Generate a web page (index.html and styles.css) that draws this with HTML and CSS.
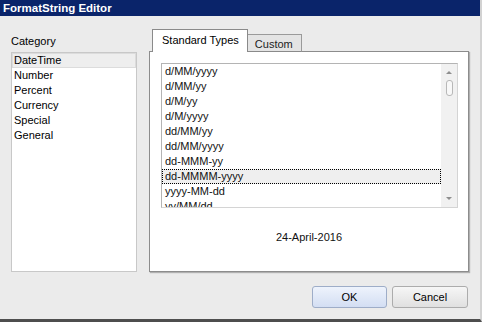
FILE: index.html
```html
<!DOCTYPE html>
<html lang="en">
<head>
  <meta charset="UTF-8">
  <title>FormatString Editor</title>
  <link rel="stylesheet" href="styles.css">
</head>
<body>
  <div class="window">
    <div class="titlebar">FormatString Editor</div>
    <div class="content">
      <div class="main">
        <div class="category">
          <div class="label">Category</div>
          <ul class="cat-list">
            <li class="sel">DateTime</li>
            <li>Number</li>
            <li>Percent</li>
            <li>Currency</li>
            <li>Special</li>
            <li>General</li>
          </ul>
        </div>
        <div class="tabs-area">
          <div class="tabs">
            <div class="tab active">Standard Types</div>
            <div class="tab">Custom</div>
          </div>
          <div class="panel">
            <div class="listbox">
              <ul class="types">
                <li>d/MM/yyyy</li>
                <li>d/MM/yy</li>
                <li>d/M/yy</li>
                <li>d/M/yyyy</li>
                <li>dd/MM/yy</li>
                <li>dd/MM/yyyy</li>
                <li>dd-MMM-yy</li>
                <li class="sel">dd-MMMM-yyyy</li>
                <li>yyyy-MM-dd</li>
                <li>yy/MM/dd</li>
              </ul>
              <div class="scrollbar">
                <span class="arrow up"></span>
                <span class="thumb"></span>
                <span class="spacer"></span>
                <span class="arrow down"></span>
              </div>
            </div>
            <div class="preview">24-April-2016</div>
          </div>
        </div>
      </div>
      <div class="buttons">
        <button class="btn ok">OK</button>
        <button class="btn cancel">Cancel</button>
      </div>
    </div>
  </div>
</body>
</html>
```

FILE: styles.css
```css
html, body {
  margin: 0;
  padding: 0;
}
body {
  width: 482px;
  height: 322px;
  overflow: hidden;
  font-family: "Liberation Sans", Arial, sans-serif;
  font-size: 11px;
  color: #000;
  background: #ebebeb;
}
.window {
  width: 482px;
  height: 322px;
  box-sizing: border-box;
  border-right: 2px solid #d2d2d2;
  border-bottom: 3px solid #4e4e4e;
  display: flex;
  flex-direction: column;
}
.titlebar {
  height: 16px;
  line-height: 16px;
  background: #0a246a;
  color: #fff;
  font-weight: bold;
  font-size: 11.5px;
  padding-left: 3px;
}
.content {
  flex: 1;
  padding: 13px 0 0 11px;
}
.main {
  display: flex;
  gap: 12px;
}
.category {
  width: 126px;
}
.label {
  margin-top: 5px;
  line-height: 14px;
  height: 14px;
  margin-bottom: 4px;
}
ul {
  list-style: none;
  margin: 0;
  padding: 0;
}
.cat-list {
  height: 220px;
  box-sizing: border-box;
  background: #fff;
  border: 1px solid #c8c8c8;
}
.cat-list li {
  height: 15px;
  line-height: 15px;
  padding-left: 2px;
}
.cat-list li.sel {
  background: #eeeeee;
  border: 1px solid #dcdcdc;
  height: 13px;
  line-height: 13px;
  padding-left: 1px;
}
.tabs-area {
  width: 320px;
}
.tabs {
  display: flex;
  align-items: flex-end;
  height: 23px;
  margin-left: 3px;
  margin-bottom: -1px;
  position: relative;
  z-index: 1;
}
.tab {
  box-sizing: border-box;
  border: 1px solid #9a9a9a;
  border-bottom: none;
  padding: 0 7px 0 9px;
}
.tab.active {
  height: 23px;
  line-height: 21px;
  background: #fff;
  border-color: #8a8a8a;
  padding: 0 8px 0 9px;
}
.tab + .tab {
  height: 18px;
  line-height: 19px;
  background: #e4e4e4;
  border-left: none;
  border-bottom: 1px solid #8a8a8a;
  padding: 0 8px 0 7px;
  color: #222;
}
.panel {
  height: 221px;
  box-sizing: border-box;
  background: #fff;
  border: 1px solid #8c8c8c;
  box-shadow: 1px 1px 1px rgba(0, 0, 0, 0.25);
  padding: 11px 0 0 11px;
}
.listbox {
  width: 297px;
  height: 145px;
  box-sizing: border-box;
  border: 1px solid #b4b4b4;
  border-bottom-color: #d4d4d4;
  border-right-color: #d4d4d4;
  display: flex;
  overflow: hidden;
}
.types {
  flex: 1;
  overflow: hidden;
}
.types li {
  height: 15px;
  line-height: 15px;
  padding-left: 3px;
  color: #111;
  white-space: nowrap;
}
.types li.sel {
  background: #efefef;
  outline: 1px dotted #000;
  outline-offset: -1px;
}
.scrollbar {
  width: 16px;
  background: #f1f1f1;
  display: flex;
  flex-direction: column;
  align-items: center;
}
.arrow {
  width: 0;
  height: 0;
  border-left: 3px solid transparent;
  border-right: 3px solid transparent;
}
.arrow.up {
  margin-top: 7px;
  border-bottom: 3px solid #8e8e8e;
}
.arrow.down {
  margin-bottom: 7px;
  border-top: 3px solid #8e8e8e;
}
.thumb {
  margin-top: 6px;
  width: 5px;
  height: 14px;
  border: 1px solid #b8b8b8;
  border-radius: 3px;
  background: #f8f8f8;
}
.spacer {
  flex: 1;
}
.preview {
  margin: 22px 11px 0 0;
  text-align: center;
  line-height: 14px;
  color: #111;
}
.buttons {
  display: flex;
  justify-content: flex-end;
  gap: 5px;
  width: 457px;
  margin-top: 14px;
}
.btn {
  height: 22px;
  box-sizing: border-box;
  font-family: "Liberation Sans", Arial, sans-serif;
  font-size: 11px;
  color: #000;
  border-radius: 3px;
  padding: 0;
}
.ok {
  width: 75px;
  border: 1px solid #9eadc8;
  background: linear-gradient(#eef3fc, #d3def3);
}
.cancel {
  width: 76px;
  border: 1px solid #acacac;
  background: linear-gradient(#f6f6f6, #e0e0e0);
}
```
